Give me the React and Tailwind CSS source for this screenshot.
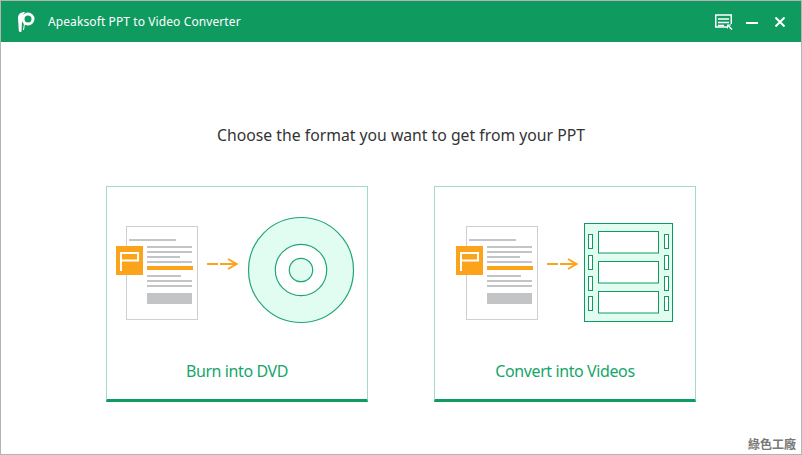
const green = "#0f9a60";

const Doc = ({ x }) => (
  <g transform={`translate(${x} 0)`}>
    <rect x="126.5" y="226.5" width="71" height="93" fill="#fff" stroke="#cfcfcf" />
    <rect x="129" y="239" width="47" height="2" fill="#c3c4c6" />
    <rect x="147" y="246" width="45" height="2" fill="#c3c4c6" />
    <rect x="147" y="251" width="45" height="2" fill="#c3c4c6" />
    <rect x="147" y="256" width="33" height="2" fill="#c3c4c6" />
    <rect x="147" y="261" width="45" height="2" fill="#c3c4c6" />
    <rect x="147" y="266" width="46" height="4" fill="#fba31a" />
    <rect x="147" y="275" width="34" height="2" fill="#c3c4c6" />
    <rect x="147" y="280" width="45" height="2" fill="#c3c4c6" />
    <rect x="147" y="285" width="45" height="2" fill="#c3c4c6" />
    <rect x="147" y="293" width="45" height="11" fill="#c3c4c6" />
    <rect x="116" y="246" width="27" height="29" fill="#fba31a" />
    <path d="M121 271V253H138V260.500H121" fill="none" stroke="#fff" strokeWidth="2" />
    <path d="M207 264H218M220 264H236M228 259L236.500 264L228 269" fill="none" stroke="#fba31a" strokeWidth="2" />
  </g>
);

const Disc = () => (
  <svg width="260" height="150" viewBox="107 187 260 150" className="block">
    <Doc x={0} />
    <circle cx="301" cy="270" r="52.500" fill="#e1fdf1" stroke="#1fa676" strokeWidth="1.200" />
    <circle cx="301" cy="270" r="25.700" fill="#fff" stroke="#1fa676" strokeWidth="1.200" />
    <circle cx="301" cy="270" r="11.700" fill="#e1fdf1" stroke="#1fa676" strokeWidth="1.200" />
  </svg>
);

const Film = () => (
  <svg width="260" height="150" viewBox="435 187 260 150" className="block">
    <Doc x={340} />
    <rect x="584.500" y="223.500" width="88" height="98" fill="#e1fdf1" stroke={green} />
    {[231.5, 261.5, 291.5].map((y) => (
      <rect key={y} x="598.500" y={y} width="60" height="21.500" fill="#fff" stroke={green} />
    ))}
    {[234.5, 255.5, 276.5, 296.5].map((y) => (
      <g key={y}>
        <rect x="588.500" y={y} width="4" height="14" fill="#fff" stroke={green} />
        <rect x="664.500" y={y} width="4" height="14" fill="#fff" stroke={green} />
      </g>
    ))}
  </svg>
);

const Card = ({ label, children }) => (
  <div className="flex flex-col w-[262px] h-[216px] border border-[#9fdcc5] border-b-[3px] border-b-[#0f9a60]">
    {children}
    <div className="mt-[23px] text-center text-[16px] tracking-[-0.4px] leading-[22px] text-[#16a56b]">{label}</div>
  </div>
);

export default function App() {
  return (
    <div className="relative w-[802px] h-[455px] bg-white border border-[#b4b4b4] overflow-hidden font-['Noto_Sans','Open_Sans',sans-serif]">
      <header className="flex items-center h-[41px] bg-[#0f9a60] text-white">
        <svg width="20" height="23" viewBox="0 0 20 23" className="ml-[15px]">
          <path d="M2 8C2 4 5 2 9 2C6.500 5 6 8 6 12L5.500 21.500C4.500 22.500 3 22 2.800 20.500Z" fill="#fff" />
          <circle cx="12" cy="9" r="5" fill="none" stroke="#fff" strokeWidth="3" />
          <path d="M8.500 13.500L7.500 20" stroke="#fff" strokeWidth="1" />
        </svg>
        <span className="ml-[12px] text-[12px] tracking-[0.1px]">Apeaksoft PPT to Video Converter</span>
        <div className="flex items-center ml-auto mr-[16px]">
          <svg width="18" height="16" viewBox="0 0 18 16">
            <path d="M13 13H0.750V1H16.250V10" fill="none" stroke="#fff" strokeWidth="1.500" />
            <path d="M3 5H14M3 8.500H14M3 11.500H9" stroke="#fff" strokeWidth="1.300" />
            <path d="M12 10.500H16V11.500H14L17.500 15L16.500 16L13 12.500V14.500H12Z" fill="#fff" />
          </svg>
          <div className="w-[12px] h-[2px] bg-white ml-[13px] mt-[3px]" />
          <svg width="10" height="10" viewBox="0 0 10 10" className="ml-[17px]">
            <path d="M0.500 0.500L9.500 9.500M9.500 0.500L0.500 9.500" stroke="#fff" strokeWidth="2" />
          </svg>
        </div>
      </header>
      <main className="flex flex-col items-center">
        <h1 className="mt-[81px] text-[15.75px] leading-[24px] text-[#333]">Choose the format you want to get from your PPT</h1>
        <div className="flex gap-[66px] mt-[39px]">
          <Card label="Burn into DVD"><Disc /></Card>
          <Card label="Convert into Videos"><Film /></Card>
        </div>
      </main>
      <div className="absolute right-[5px] bottom-[2px] text-[12px] leading-[16px] font-bold text-[#777] font-['Noto_Sans_CJK_TC',sans-serif]">綠色工廠</div>
    </div>
  );
}
